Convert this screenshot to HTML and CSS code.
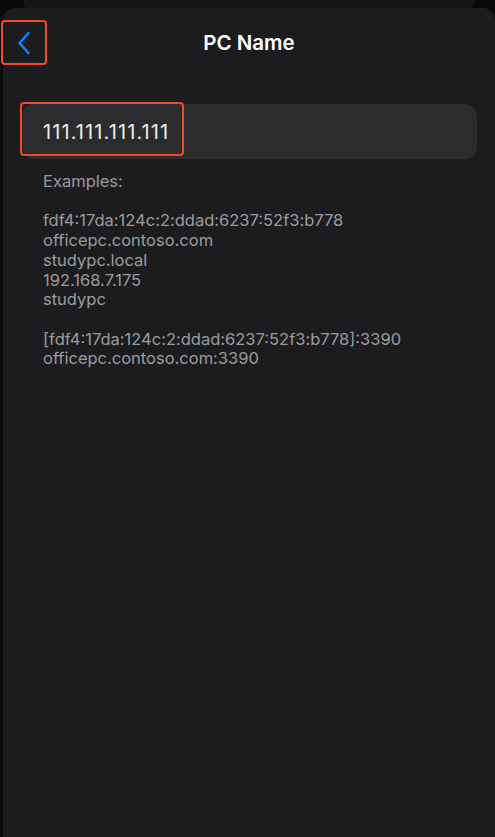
FILE: index.html
```html
<!DOCTYPE html>
<html lang="en">
<head>
    <meta charset="UTF-8">
    <meta name="viewport" content="width=device-width, initial-scale=1.0">
    <title>PC Name</title>
    <link rel="stylesheet" href="styles.css">
</head>
<body>
    <div class="back-sheet"></div>
    <div class="sheet">
        <!-- 顶部导航 -->
        <header class="nav">
            <button class="back" aria-label="Back">
                <svg width="14" height="24" viewBox="0 0 14 24">
                    <path d="M11.5 2 L2.5 12 L11.5 22" fill="none" stroke="#0a84ff" stroke-width="2.6" stroke-linecap="round" stroke-linejoin="round"/>
                </svg>
            </button>
            <h1 class="title">PC Name</h1>
        </header>
        <div class="content">
            <div class="field">
                <span class="value">111.111.111.111</span>
            </div>
            <div class="hint">
                <p>Examples:</p>
                <p>fdf4:17da:124c:2:ddad:6237:52f3:b778<br>officepc.contoso.com<br>studypc.local<br>192.168.7.175<br>studypc</p>
                <p>[fdf4:17da:124c:2:ddad:6237:52f3:b778]:3390<br>officepc.contoso.com:3390</p>
            </div>
        </div>
    </div>
</body>
</html>
```

FILE: styles.css
```css
html, body {
    height: 100%;
}
body {
    margin: 0;
    background: #0a0a0a;
    font-family: Inter, "Liberation Sans", sans-serif;
    display: flex;
    flex-direction: column;
    overflow: hidden;
}
.back-sheet {
    flex: none;
    height: 24px;
    margin: -12px 20px -4px 23px;
    border-radius: 12px;
    background: #161618;
}
.sheet {
    flex: 1;
    position: relative;
    margin-left: 3px;
    border-radius: 12px 12px 0 0;
    background: #1c1c1e;
}
.nav {
    display: grid;
    grid-template-columns: 1fr auto 1fr;
    align-items: center;
    padding-top: 12px;
}
.back {
    justify-self: start;
    width: 46px;
    height: 45px;
    margin-left: -2px;
    padding: 0;
    display: flex;
    align-items: center;
    justify-content: center;
    border: 2px solid #f04a2a;
    border-radius: 4px;
    background: none;
    cursor: pointer;
}
.title {
    margin: 0;
    color: #fff;
    font-size: 20.5px;
    font-weight: 600;
}
.content {
    padding: 39px 18px 0 19px;
}
.field {
    display: flex;
    align-items: flex-start;
    height: 55px;
    border-radius: 12px;
    background: #2c2c2e;
}
.value {
    box-sizing: border-box;
    height: 54px;
    margin: -2px 0 0 -2px;
    padding: 5px 13px 0 21px;
    display: flex;
    align-items: center;
    border: 2px solid #f04a2a;
    border-radius: 4px;
    color: #ececec;
    font-size: 20px;
    letter-spacing: 1.1px;
}
.hint {
    padding: 13px 0 0 21px;
    color: #9b9b9e;
    font-size: 16.5px;
    line-height: 19.7px;
}
.hint p {
    margin: 0 0 19.7px;
}
```
